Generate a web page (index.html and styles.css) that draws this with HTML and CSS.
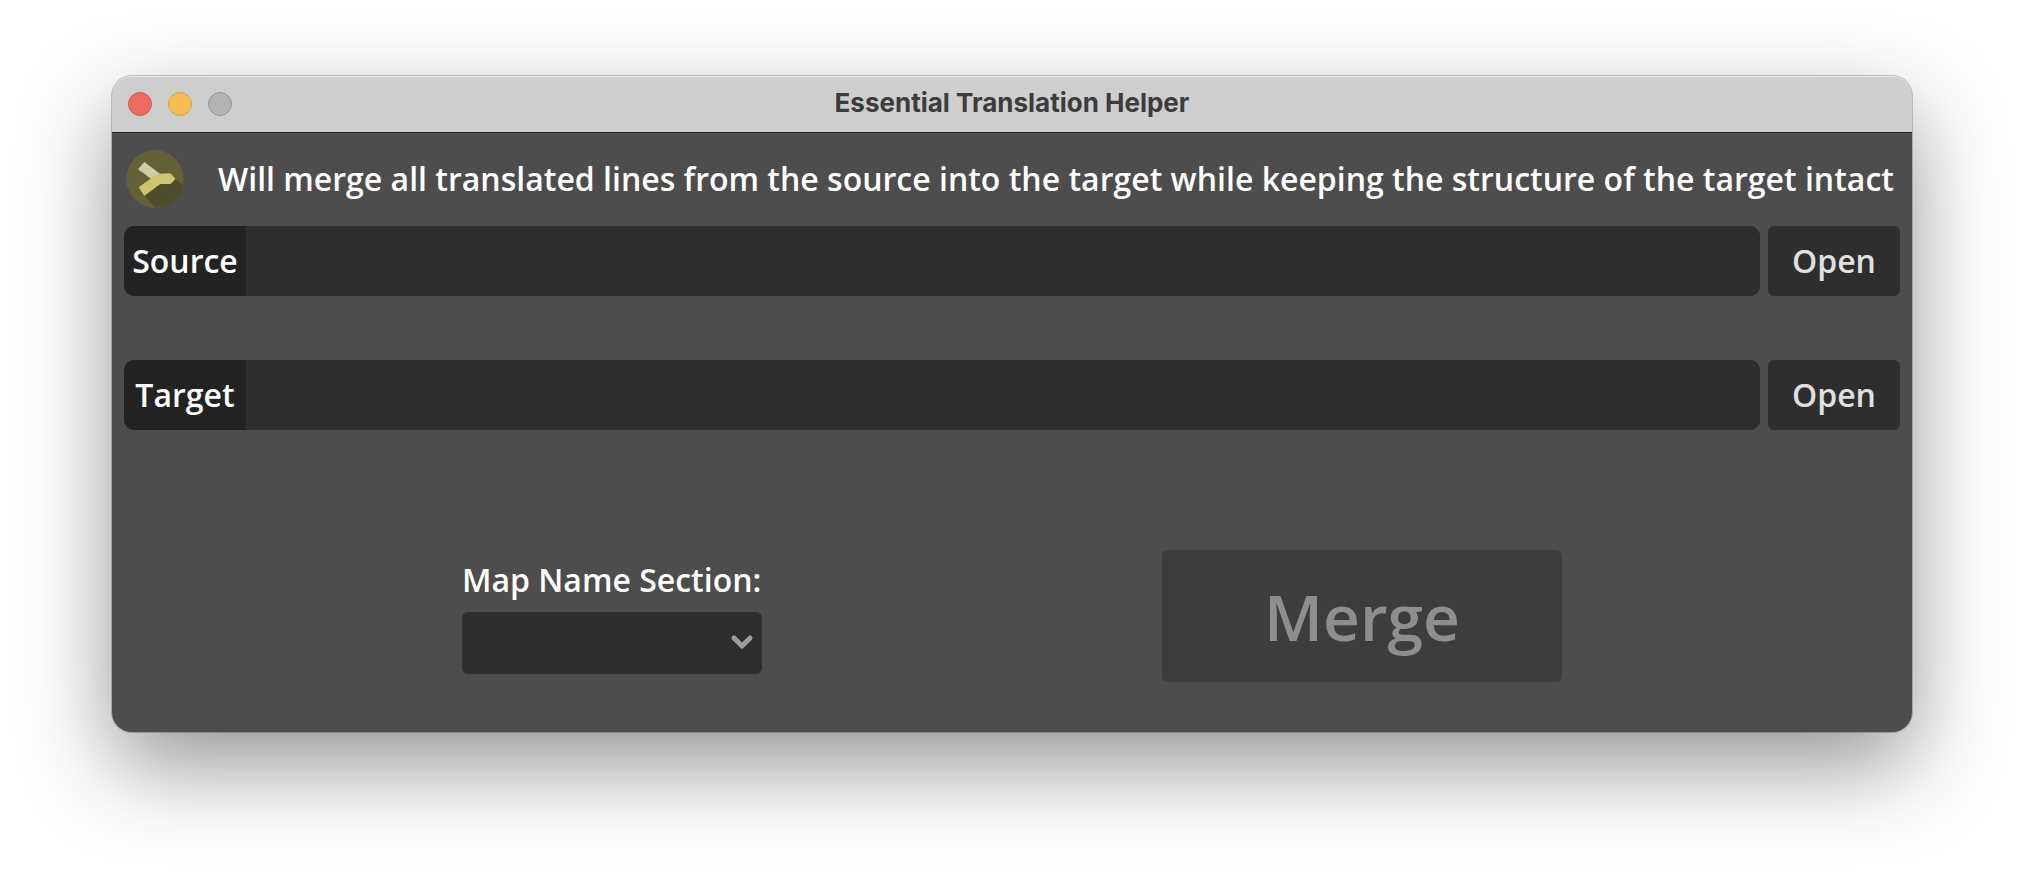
FILE: index.html
```
<!DOCTYPE html>
<html lang="en">
<head>
<meta charset="utf-8">
<title>Essential Translation Helper</title>
<link rel="stylesheet" href="styles.css">
</head>
<body>
<div class="window">
  <header class="titlebar">
    <div class="lights">
      <button class="light close" type="button" aria-label="Close"></button>
      <button class="light minimize" type="button" aria-label="Minimize"></button>
      <button class="light zoom" type="button" aria-label="Zoom" disabled></button>
    </div>
    <h1 class="title">Essential Translation Helper</h1>
  </header>
  <main class="content">
    <div class="intro">
      <svg class="merge-icon" viewBox="18 30 174 174" aria-hidden="true">
        <circle cx="105" cy="117" r="86" fill="#646137"/>
        <path d="M73 167 118 132 150 132 166 117 190 138A86 86 0 0 1 106 203Z" fill="#4f4c29"/>
        <path d="M73 66 120 101 103 124 54 88Z" fill="#d0cba8"/>
        <path d="M56 142 108 104Q112 101 118 101L148 100Q152 100 155 103L166 117 155 129Q152 132 148 132L121 132 73 167Z" fill="#cbc56f"/>
      </svg>
      <p class="intro-text">Will merge all translated lines from the source into the target while keeping the structure of the target intact</p>
    </div>
    <div class="file-row">
      <div class="field">
        <label class="field-label" for="source">Source</label>
        <input class="field-input" id="source" type="text">
      </div>
      <button class="open" type="button">Open</button>
    </div>
    <div class="file-row">
      <div class="field">
        <label class="field-label" for="target">Target</label>
        <input class="field-input" id="target" type="text">
      </div>
      <button class="open" type="button">Open</button>
    </div>
    <div class="actions">
      <div class="section">
        <label for="section">Map Name Section:</label>
        <div class="select-wrap">
          <select class="select" id="section"></select>
          <svg class="chevron" viewBox="0 0 24 16" aria-hidden="true"><path d="M4 4 12 12 20 4" fill="none" stroke="#9c9c9c" stroke-width="5" stroke-linecap="round" stroke-linejoin="round"/></svg>
        </div>
      </div>
      <button class="merge" type="button" disabled>Merge</button>
    </div>
  </main>
</div>
</body>
</html>
```
FILE: styles.css
```
* {
  box-sizing: border-box;
}

body {
  min-height: 100vh;
  margin: 0;
  padding: 76px 112px;
  background: #fff;
  color: #fff;
  font: 600 32px/44px "Open Sans", "Noto Sans", sans-serif;
}

button,
input,
select {
  margin: 0;
  border: 0;
  padding: 0;
  color: inherit;
  font: inherit;
}

.window {
  border-radius: 20px;
  background: #4d4d4d;
  box-shadow: 0 0 0 1px rgba(0, 0, 0, 0.2), 0 34px 90px rgba(0, 0, 0, 0.42);
}

.titlebar {
  display: grid;
  grid-template-columns: 1fr auto 1fr;
  align-items: center;
  height: 57px;
  padding: 0 16px;
  border-bottom: 1px solid #1c1c1c;
  border-radius: 20px 20px 0 0;
  background: #cecece;
  box-shadow: inset 0 1px 0 #ececec;
}

.lights {
  display: flex;
  gap: 16px;
}

.light {
  width: 24px;
  height: 24px;
  border: 1px solid;
  border-radius: 50%;
}

.close {
  border-color: #d0564c;
  background: #ed6b60;
}

.minimize {
  border-color: #d6a044;
  background: #f5bf50;
}

.zoom {
  border-color: #959595;
  background: #b3b3b3;
}

.title {
  margin: 0;
  padding-bottom: 2px;
  color: #3c3c3c;
  font: 700 26px/32px Inter, sans-serif;
}

.content {
  padding: 17px 12px 50px;
}

.intro {
  display: flex;
  align-items: center;
  gap: 34px;
  padding: 0 2px;
  margin-bottom: 18px;
}

.merge-icon {
  flex: none;
  width: 58px;
  height: 58px;
}

.intro-text {
  margin: 0;
  white-space: nowrap;
}

.file-row {
  display: flex;
  gap: 8px;
  margin-bottom: 64px;
}

.field {
  display: flex;
  flex: 1;
  height: 70px;
  border-radius: 10px;
  overflow: hidden;
  background: #2e2e2e;
}

.field-label {
  width: 122px;
  padding-top: 13px;
  background: #232323;
  text-align: center;
}

.field-input {
  flex: 1;
  min-width: 0;
  padding: 0 12px;
  background: #2e2e2e;
}

.open {
  width: 132px;
  border-radius: 6px;
  background: #2e2e2e;
  color: #e0e0e0;
}

.actions {
  display: flex;
  justify-content: center;
  align-items: center;
  gap: 400px;
  margin-top: 120px;
}

.section {
  display: flex;
  flex-direction: column;
  gap: 10px;
  width: 300px;
  white-space: nowrap;
}

.select-wrap {
  position: relative;
  height: 62px;
}

.select {
  width: 100%;
  height: 100%;
  border-radius: 6px;
  background: #2e2e2e;
  appearance: none;
}

.chevron {
  position: absolute;
  top: 22px;
  right: 8px;
  width: 24px;
  height: 16px;
  pointer-events: none;
}

.merge {
  width: 400px;
  height: 132px;
  padding-top: 2px;
  border-radius: 6px;
  background: #3d3d3d;
  color: #8e8e8e;
  font-size: 64px;
  line-height: 88px;
}
```
